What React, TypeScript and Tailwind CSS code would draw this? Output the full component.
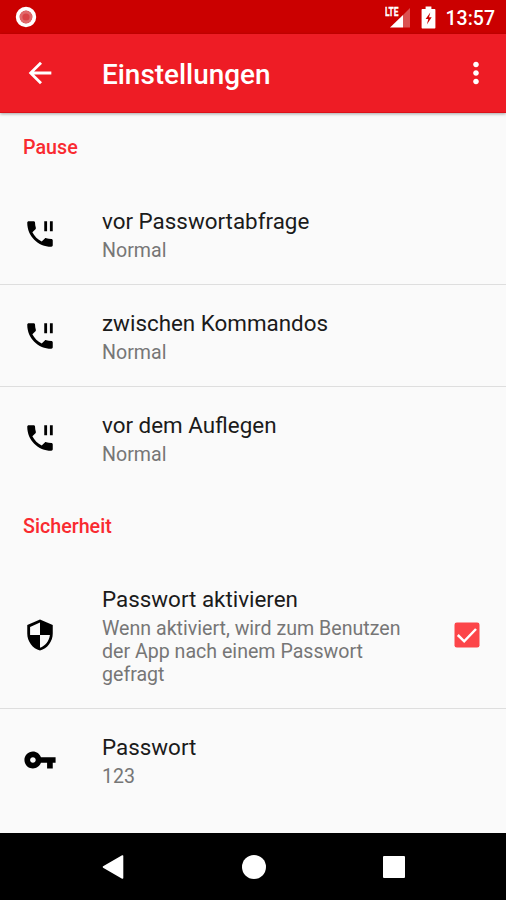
import type { ReactNode } from "react";

const PHONE_PAUSED =
  "M17 3h-2v7h2V3zm3 12.5c-1.25 0-2.45-.2-3.57-.57-.35-.11-.74-.03-1.02.24l-2.2 2.2c-2.83-1.44-5.15-3.75-6.59-6.59l2.2-2.21c.28-.26.36-.65.25-1C8.7 6.45 8.5 5.25 8.5 4c0-.55-.45-1-1-1H4c-.55 0-1 .45-1 1 0 9.39 7.61 17 17 17 .55 0 1-.45 1-1v-3.5c0-.55-.45-1-1-1zM19 3v7h2V3h-2z";
const SECURITY =
  "M12 1L3 5v6c0 5.55 3.84 10.74 9 12 5.16-1.26 9-6.45 9-12V5l-9-4zm0 10.99h7c-.53 4.12-3.28 7.79-7 8.94V12H5V6.3l7-3.11v8.8z";
const KEY =
  "M12.65 10C11.83 7.67 9.61 6 7 6c-3.31 0-6 2.69-6 6s2.69 6 6 6c2.61 0 4.83-1.67 5.65-4H17v4h4v-4h2v-4H12.65zM7 14c-1.1 0-2-.9-2-2s.9-2 2-2 2 .9 2 2-.9 2-2 2z";
const ARROW_BACK = "M20 11H7.83l5.59-5.59L12 4l-8 8 8 8 1.41-1.41L7.83 13H20v-2z";
const MORE =
  "M12 8c1.1 0 2-.9 2-2s-.9-2-2-2-2 .9-2 2 .9 2 2 2zm0 2c-1.1 0-2 .9-2 2s.9 2 2 2 2-.9 2-2-.9-2-2-2zm0 6c-1.1 0-2 .9-2 2s.9 2 2 2 2-.9 2-2-.9-2-2-2z";

function Icon({ d }: { d: string }) {
  return (
    <svg viewBox="0 0 24 24" className="h-[34px] w-[34px] shrink-0" fill="currentColor">
      <path d={d} />
    </svg>
  );
}

function StatusBar() {
  return (
    <div className="flex h-[34px] items-center bg-[#cb0000] pr-[11px] pl-[15px] text-white">
      <svg viewBox="0 0 22 22" className="h-[22px] w-[22px]">
        <circle cx="11" cy="11" r="8.3" fill="#d9393d" stroke="#fff" strokeWidth="3.8" />
        <circle cx="11" cy="11" r="6.2" fill="#e06a6c" />
        <circle cx="11" cy="11" r="3.6" fill="#d94347" />
      </svg>
      <svg viewBox="0 0 26 24" className="ml-auto h-[24px] w-[26px]">
        <path d="M5 22.5 18 10v12.5z" fill="#fff" />
        <path d="M18 10 25 3v19.5h-7z" fill="#fff" fillOpacity=".32" />
        <text x="0" y="11" fill="#fff" stroke="#fff" strokeWidth=".3" fontFamily="Roboto, sans-serif" fontSize="12.5" fontWeight="700" textLength="13.5" lengthAdjust="spacingAndGlyphs">
          LTE
        </text>
      </svg>
      <svg viewBox="0 0 15 23" className="ml-[10px] h-[23px] w-[15px]">
        <path d="M4.6.5h5.8V3h3.3c.4 0 .7.3.7.7v18c0 .4-.3.7-.7.7H1.3c-.4 0-.7-.3-.7-.7v-18c0-.4.3-.7.7-.7h3.3z" fill="#fff" />
        <path d="M9.3 6.500 4.600 13h2.700l-1.400 5.500 4.800-7.200H8z" fill="#cb0000" />
      </svg>
      <span className="ml-[10px] pt-[3px] text-[19.5px] leading-none font-medium">13:57</span>
    </div>
  );
}

function AppBar() {
  return (
    <header className="z-10 flex h-[79px] items-center border-b border-[#dc1018] bg-[#ee1c25] pr-[13px] pl-[23px] text-white shadow-[0_1px_3px_rgba(0,0,0,0.35)]">
      <Icon d={ARROW_BACK} />
      <h1 className="ml-[45px] flex-1 pt-[4px] text-[27.9px] leading-8 font-medium">Einstellungen</h1>
      <Icon d={MORE} />
    </header>
  );
}

function Category({ height, children }: { height: string; children: ReactNode }) {
  return <h2 className={`flex items-center pl-[23px] text-[19.7px] font-medium text-[#f92a30] ${height}`}>{children}</h2>;
}

interface RowProps {
  icon: string;
  title: string;
  summary: ReactNode;
  height: string;
  divider?: boolean;
  checked?: boolean;
}

function Row({ icon, title, summary, height, divider, checked }: RowProps) {
  return (
    <div className={`flex items-center pl-[23px] ${height} ${divider ? "border-b border-[#dedede]" : ""}`}>
      <Icon d={icon} />
      <div className="ml-[45px] w-[320px] pt-[2px]">
        <div className="text-[22.4px] leading-[27px] text-[#1b1b1b]">{title}</div>
        <div className="mt-[4px] text-[19.6px] leading-[23px] text-[#767676]">{summary}</div>
      </div>
      {checked && (
        <svg viewBox="0 0 26 26" className="ml-[32px] h-[26px] w-[26px]">
          <rect x=".5" y=".5" width="25" height="25" rx="2.3" fill="#fc4549" />
          <path d="m3.8 13 6.4 6.3L22 7" fill="none" stroke="#fff" strokeWidth="2.5" />
        </svg>
      )}
    </div>
  );
}

function NavBar() {
  return (
    <nav className="flex h-[67px] items-center justify-between bg-black pr-[101px] pl-[102px]">
      <svg viewBox="0 0 22 26" className="h-[26px] w-[22px]">
        <path d="M1.5 13 20.5 2v22z" fill="#fff" stroke="#fff" strokeWidth="1.6" strokeLinejoin="round" />
      </svg>
      <div className="h-[24px] w-[24px] rounded-full bg-white" />
      <div className="h-[22px] w-[22px] rounded-[1px] bg-white" />
    </nav>
  );
}

export default function App() {
  return (
    <div className="flex h-[900px] w-[506px] flex-col overflow-hidden bg-[#fafafa] font-[Roboto,sans-serif] text-black">
      <StatusBar />
      <AppBar />
      <main className="flex-1">
        <Category height="h-[70px]">Pause</Category>
        <Row icon={PHONE_PAUSED} title="vor Passwortabfrage" summary="Normal" height="h-[102px]" divider />
        <Row icon={PHONE_PAUSED} title="zwischen Kommandos" summary="Normal" height="h-[102px]" divider />
        <Row icon={PHONE_PAUSED} title="vor dem Auflegen" summary="Normal" height="h-[102px]" />
        <Category height="h-[72px] pt-[3px]">Sicherheit</Category>
        <Row
          icon={SECURITY}
          title="Passwort aktivieren"
          summary="Wenn aktiviert, wird zum Benutzen der App nach einem Passwort gefragt"
          height="h-[148px]"
          divider
          checked
        />
        <Row icon={KEY} title="Passwort" summary="123" height="h-[102px]" />
      </main>
      <NavBar />
    </div>
  );
}
